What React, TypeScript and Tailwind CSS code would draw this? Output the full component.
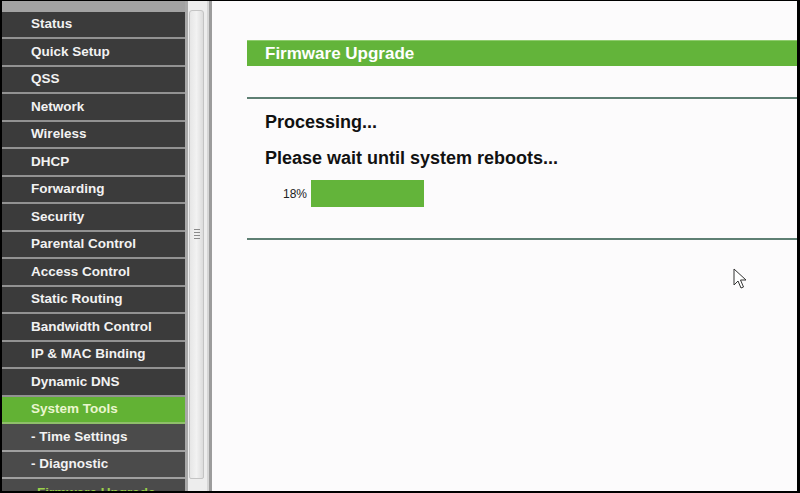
import React from "react";

const mainItems = [
  "Status",
  "Quick Setup",
  "QSS",
  "Network",
  "Wireless",
  "DHCP",
  "Forwarding",
  "Security",
  "Parental Control",
  "Access Control",
  "Static Routing",
  "Bandwidth Control",
  "IP & MAC Binding",
  "Dynamic DNS",
];

const subItems = ["- Time Settings", "- Diagnostic"];

export default function App() {
  return (
    <div
      className="relative w-[800px] h-[493px] overflow-hidden bg-black border-l-2 border-t border-r-[3px] border-b-2 border-black flex"
      style={{ fontFamily: '"Liberation Sans", Arial, sans-serif' }}
    >
      {/* Sidebar menu */}
      <div className="w-[183px] shrink-0 flex flex-col bg-[#3b3b3b]">
        <div className="h-[10.5px] shrink-0 bg-[#a2a2a2]" />
        {mainItems.map((t) => (
          <div
            key={t}
            className="h-[27.5px] shrink-0 border-b-2 border-[#929292] bg-[#3b3b3b] flex items-center pl-[29px] text-[13.5px] font-bold text-[#f2f2f2]"
          >
            {t}
          </div>
        ))}
        <div className="h-[27.5px] shrink-0 border-b-2 border-[#8fbf6a] bg-[#62b234] flex items-center pl-[29px] text-[13.5px] font-bold text-[#eaf6cf]">
          System Tools
        </div>
        {subItems.map((t) => (
          <div
            key={t}
            className="h-[27.5px] shrink-0 border-b-2 border-[#a0a0a0] bg-[#4b4b4b] flex items-center pl-[29px] text-[13.5px] font-bold text-[#f2f2f2]"
          >
            {t}
          </div>
        ))}
        <div className="h-[27.5px] shrink-0 bg-[#4b4b4b] flex items-center pl-[35px] text-[13.5px] font-bold text-[#9ad04a]">
          Firmware Upgrade
        </div>
      </div>

      {/* separator strip */}
      <div className="w-[3px] shrink-0 bg-[#a9a9a9]" />

      {/* scrollbar */}
      <div className="w-[19px] shrink-0 bg-[#ededed] flex flex-col pt-[9px] pl-[1px] pr-[3px]">
        <div className="h-[469px] rounded-t-[3px] rounded-b-[2px] border border-[#c4c4c4] bg-gradient-to-r from-[#e6e6e6] via-[#f2f2f2] to-[#dcdcdc] flex items-start justify-center pt-[218px]">
          <div className="flex flex-col gap-[2px]">
            <div className="w-[6px] h-[1px] bg-[#8a8a8a]" />
            <div className="w-[6px] h-[1px] bg-[#8a8a8a]" />
            <div className="w-[6px] h-[1px] bg-[#8a8a8a]" />
            <div className="w-[6px] h-[1px] bg-[#8a8a8a]" />
          </div>
        </div>
      </div>

      {/* frame border */}
      <div className="w-[2px] shrink-0 bg-[#d6d6d6]" />
      <div className="w-[3px] shrink-0 bg-[#9c9c9c]" />

      {/* content */}
      <div className="flex-1 bg-[#fcfbfc] pl-[35px] pt-[39px] flex flex-col">
        <div className="h-[26px] shrink-0 bg-[#63b43a] border-t border-[#8fcc6e] flex items-center pl-[18px] text-[17px] font-bold text-white">
          Firmware Upgrade
        </div>
        <div className="mt-[31px] h-[2px] shrink-0 bg-[#5e7f73]" />
        <div className="mt-[13px] pl-[18px] h-[20px] leading-[20px] text-[18px] font-bold text-[#111]">
          Processing...
        </div>
        <div className="mt-[16px] pl-[18px] h-[20px] leading-[20px] text-[18px] font-bold text-[#111]">
          Please wait until system reboots...
        </div>
        <div className="mt-[12px] pl-[36px] flex items-center h-[27px]">
          <span className="text-[12px] text-[#222] w-[28px]">18%</span>
          <div className="w-[113px] h-[27px] bg-[#63b43a]" />
        </div>
        <div className="mt-[31px] h-[2px] shrink-0 bg-[#5e7f73]" />
      </div>

      {/* mouse cursor */}
      <svg
        className="absolute left-[731px] top-[267px]"
        width="16"
        height="24"
        viewBox="0 0 16 24"
      >
        <path
          d="M1 1 L1 17 L5 13 L8 20 L10.5 19 L7.5 12 L13 12 Z"
          fill="#ffffff"
          stroke="#333333"
          strokeWidth="1"
          strokeLinejoin="round"
        />
      </svg>
    </div>
  );
}
